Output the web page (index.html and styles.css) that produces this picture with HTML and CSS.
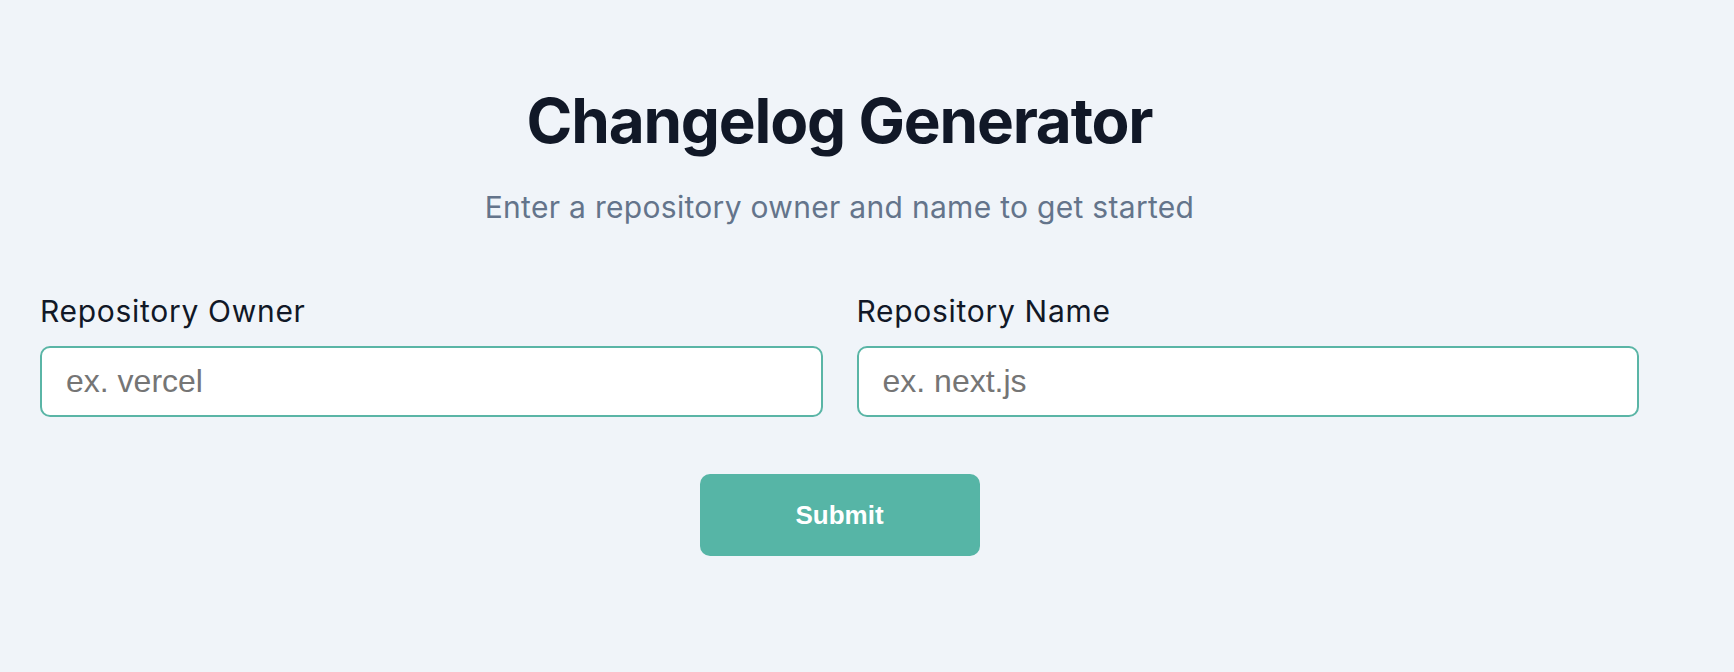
FILE: index.html
```html
<!DOCTYPE html>
<html lang="en">
<head>
<meta charset="utf-8">
<title>Changelog Generator</title>
<link rel="stylesheet" href="styles.css">
</head>
<body>
<main class="page">
  <h1 class="title">Changelog Generator</h1>
  <p class="subtitle">Enter a repository owner and name to get started</p>
  <form class="form">
    <div class="fields">
      <label class="field">
        <span class="label">Repository Owner</span>
        <input class="input" type="text" placeholder="ex. vercel">
      </label>
      <label class="field">
        <span class="label">Repository Name</span>
        <input class="input" type="text" placeholder="ex. next.js">
      </label>
    </div>
    <button class="submit" type="button">Submit</button>
  </form>
</main>
</body>
</html>
```

FILE: styles.css
```css
html, body {
  margin: 0;
  padding: 0;
  background: #f0f4f9;
  font-family: Inter, "Noto Sans", sans-serif;
}

.page {
  width: 1599px;
  margin-left: 40px;
  padding-top: 90px;
  display: flex;
  flex-direction: column;
  align-items: center;
}

.title {
  margin: 0;
  font-size: 62px;
  line-height: 62px;
  font-weight: 700;
  color: #111827;
  letter-spacing: -1.2px;
}

.subtitle {
  margin: 37px 0 0;
  font-size: 30px;
  line-height: 36px;
  color: #64748b;
  letter-spacing: 0.3px;
}

.form {
  width: 100%;
  margin-top: 68px;
  display: flex;
  flex-direction: column;
  align-items: center;
}

.fields {
  width: 100%;
  display: grid;
  grid-template-columns: 1fr 1fr;
  gap: 34px;
}

.field {
  display: flex;
  flex-direction: column;
  gap: 17px;
}

.label {
  font-size: 30px;
  line-height: 36px;
  color: #111827;
  letter-spacing: 0.7px;
}

.input {
  box-sizing: border-box;
  height: 71px;
  width: 100%;
  padding: 0 24px;
  border: 2px solid #5ab5a6;
  border-radius: 10px;
  background: #ffffff;
  font-family: "Liberation Sans", Arial, sans-serif;
  font-size: 32px;
  color: #111827;
  outline: none;
}

.input::placeholder {
  color: #757575;
}

.submit {
  margin-top: 57px;
  width: 280px;
  height: 82px;
  border: none;
  border-radius: 10px;
  background: #56b5a6;
  color: #ffffff;
  font-family: "Liberation Sans", Arial, sans-serif;
  font-size: 26px;
  font-weight: 700;
}
```
